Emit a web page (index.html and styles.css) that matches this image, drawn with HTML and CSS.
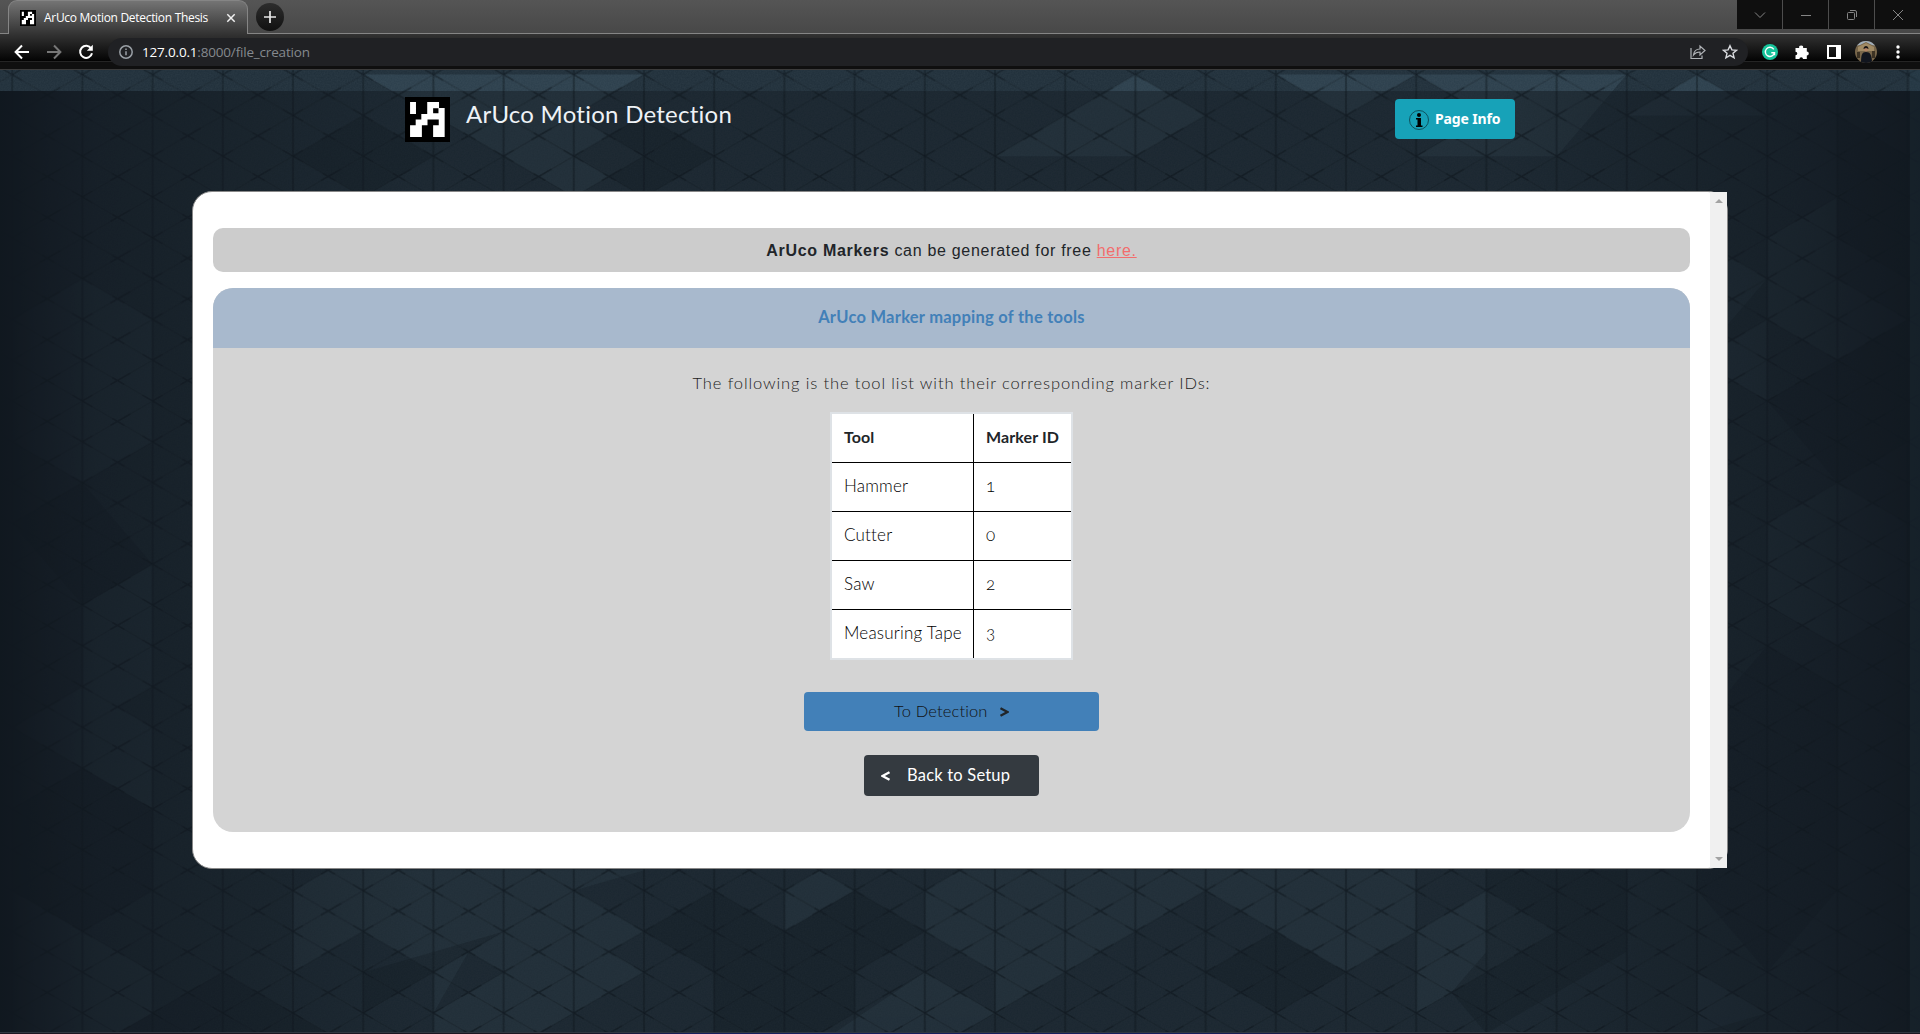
FILE: index.html
```html
<!DOCTYPE html>
<html lang="en">
<head>
<meta charset="utf-8">
<title>ArUco Motion Detection Thesis</title>
<link rel="stylesheet" href="styles.css">
</head>
<body>
<svg class="defs" width="0" height="0" aria-hidden="true">
  <symbol id="marker" viewBox="0 0 8 8">
    <path fill="#000" d="M0 0h8v8H0z"/>
    <path fill="#fff" d="M.9.9h1.05v2.1H.9zM3.950.9h2.1v1.050h1V7.100H5V5h1V4H4v1H3v2.100H.9V5h1V4h1V3h1.050zM5 2v.9h.950V2z" fill-rule="evenodd"/>
  </symbol>
</svg>
<div class="browser">
  <div class="tabstrip">
    <div class="tab">
      <svg class="favicon"><use href="#marker"/></svg>
      <span class="tab-title">ArUco Motion Detection Thesis</span>
      <svg class="tab-close" viewBox="0 0 10 10"><path d="M1.3 1.3l7.4 7.4M8.7 1.3L1.3 8.7" stroke="#f1f1f1" stroke-width="1.5"/></svg>
    </div>
    <div class="new-tab"><svg viewBox="0 0 12 12" width="12" height="12"><path d="M6 0v12M0 6h12" stroke="#e8e8e8" stroke-width="1.7"/></svg></div>
    <div class="window-buttons">
      <span><svg viewBox="0 0 12 12"><path d="M1 3.5l5 5 5-5"/></svg></span>
      <span><svg viewBox="0 0 12 12"><path d="M1 6.5h10"/></svg></span>
      <span><svg viewBox="0 0 12 12"><rect x="1.5" y="3.5" width="7" height="7" rx="1"/><path d="M4 1.5h5a1.5 1.5 0 0 1 1.5 1.5v5"/></svg></span>
      <span><svg viewBox="0 0 12 12"><path d="M1 1l10 10M11 1L1 11"/></svg></span>
    </div>
  </div>
  <div class="toolbar">
    <svg class="nav" viewBox="0 0 16 16"><path d="M15 8H2M8 1.5L1.6 8 8 14.5" stroke="#fff"/></svg>
    <svg class="nav" viewBox="0 0 16 16"><path d="M1 8h13M8 1.5L14.4 8 8 14.5" stroke="#777"/></svg>
    <svg class="nav" viewBox="0 0 16 16"><path d="M13.2 4.6A6 6 0 1 0 14 9.2" stroke="#fff"/><path d="M14.8.8v6H8.8z" fill="#fff" stroke="none"/></svg>
    <div class="omnibox">
      <svg class="site-info" viewBox="0 0 14 14"><circle cx="7" cy="7" r="6.2"/><path d="M7 6.3v4M7 3.4v1.6"/></svg>
      <span class="url"><b>127.0.0.1</b>:8000/file_creation</span>
      <svg class="share" viewBox="0 0 16 16"><path d="M1 4v10.5h11V11.5"/><path d="M3.5 11C4 7 6.500 5 10 5V2l5 4.500-5 4.500V8C7.200 8 5 9 3.500 11z"/></svg>
      <svg class="star" viewBox="0 0 16 16"><path d="M8 1.700l1.900 4.200 4.600.4-3.500 3 1.100 4.500L8 11.400l-4.100 2.400L5 9.300l-3.500-3 4.600-.4z"/></svg>
    </div>
    <svg class="grammar" viewBox="0 0 16 16"><circle cx="8" cy="8" r="8" fill="#15c39a"/><path d="M11.800 5.300A4.600 4.600 0 1 0 12.500 8.700H9.300M12.500 8.500v2.800" fill="none" stroke="#fff" stroke-width="1.400"/></svg>
    <svg class="puzzle" viewBox="0 0 16 16"><path fill="#fff" d="M1.500 4h3.700a2 2 0 1 1 3.900 0h3.700v3.600a2 2 0 1 1 0 4V15H9a1.800 1.800 0 0 0-3.600 0H1.500v-3.700a1.800 1.800 0 0 0 0-3.600z"/></svg>
    <svg class="panel-icon" viewBox="0 0 14 14"><path fill="#fff" fill-rule="evenodd" d="M0 0h14v14H0zM2 2v10h7V2z"/></svg>
    <svg class="avatar" viewBox="0 0 22 22"><defs><clipPath id="face"><circle cx="11" cy="11" r="11"/></clipPath></defs><g clip-path="url(#face)"><path fill="#78664a" d="M0 0h22v22H0z"/><path fill="#a0aebb" d="M0 0h22v5l-5-1-6-3-6 3-5 1z"/><path fill="#a18b65" d="M3 6l8-4 8 4v4H3z"/><path fill="#3d3324" d="M2 11h3v6H2zM17 10h3v7h-3z"/><path fill="#11151e" d="M6 22c0-8 1-11 5-11s6 3 6 11z"/><circle cx="11" cy="8.500" r="2" fill="#b48465"/><path fill="#171313" d="M8.500 8c0-4 5-4 5 0L11 7z"/></g></svg>
    <svg class="more" viewBox="0 0 4 14"><g fill="#fff"><circle cx="2" cy="2" r="1.700"/><circle cx="2" cy="7" r="1.700"/><circle cx="2" cy="12" r="1.700"/></g></svg>
  </div>
</div>

<div class="page">
  <svg class="backdrop" viewBox="0 70 1920 964" preserveAspectRatio="none" aria-hidden="true">
    <defs>
      <pattern id="grid" patternUnits="userSpaceOnUse" x="12.200" y="33.800" width="70.200" height="40.800">
        <path d="M0 0L70.200 40.800M0 40.800L70.200 0" stroke="#0e1820" stroke-width="1.100" opacity=".36"/>
        <path d="M0 0v40.800M70.200 0v40.800" stroke="#0e1820" stroke-width="2.200" opacity=".5"/>
        <path d="M0 0L10 5.800M60 34.900L70.200 40.800M0 40.800L10 35M30 17.400L42 24.400M28 24.400L48 12.900" stroke="#0a141b" stroke-width="1.600" opacity=".5"/>
      </pattern>
      <linearGradient id="sides"><stop offset="0" stop-color="#131b24"/><stop offset=".05" stop-color="#131b24" stop-opacity=".55"/><stop offset=".22" stop-color="#131b24" stop-opacity="0"/><stop offset=".78" stop-color="#131b24" stop-opacity="0"/><stop offset=".94" stop-color="#131b24" stop-opacity=".55"/><stop offset="1" stop-color="#131b24" stop-opacity=".9"/></linearGradient>
      <filter id="grain" x="0" y="0" width="100%" height="100%"><feTurbulence type="fractalNoise" baseFrequency=".7" numOctaves="2"/><feColorMatrix values="0 0 0 0 .6  0 0 0 0 .7  0 0 0 0 .75  0 0 0 .07 0"/></filter>
    </defs>
    <path fill="#263743" d="M0 70h1920v964H0z"/>
    <path fill="#1b2834" opacity=".6" d="M0 70h1920v21H0z"/>
    <g transform="translate(12.200 33.800) scale(70.200 40.800)">
      <g fill="#58788a" opacity=".22">
        <path d="M23 2l1-1 1 1zM25 5l1-1v2l1 1-1 1-1-1zM23 4l2 2-1 2-1-1zM24 8l1-1v2l-1-1z"/>
        <path d="M4 21l.5-.5H9l-1 .5-1 1-1 1-1-1-1 1zM0 21l2 2v1l-.5.500H0z"/>
        <path d="M6 23l2-2 1 1-.5.500.5.500-1.500 1.500H6zM6 24l1-1-.5-.5z"/>
        <path d="M11 21l.5-.5.5.5-1 1zM13 21l.5-.5H20V22l-1 1-1-1-1-1-1 1-1 1-1 1v-1l-1-1zM18.500 22.500l1-1 .5.500-1 1z"/>
        <path d="M14 21l1-.5 1 1-1 1-1 1zM11.700 24.500L13 23l1 1-.5.500z"/>
        <path d="M20 22l1-1 1 1-2 2zM24 23l1 1-1 .5z"/>
        <path d="M0 7l1-1 1 1v3l-1 1-1-1zM1 14l1-1v3l-1 1zM0 17l1-1 1 1v2l-1-1zM5 1l2 2 1-1 1-1zM18 1l1 1 1-1 2 2 1-2z"/>
        <path d="M7 3l1-1 1 1-1 1zM14 3l2-2 1 1-1 1zM20 3l1-1 1 1zM25 12l1-1 1 1v2l-1 1-1-1z"/>
      </g>
      <g fill="#101a23" opacity=".32">
        <path d="M26 8l1-1v3l-1 1-1-2zM26 2l1 1v3l-1-1zM1.500 24.500L3 23l1.500 1.500zM0 19l1-1 1 1v2l-1 1-1-1z"/>
        <path d="M12 21l1 1-1 1v1l-.5.500H10V23l-1-1 1-1 1 1zM17 23l1-1 1 1-1 1zM5 23l2-1-1 1-1 1zM21 20.500h2v2l-2 2-.5-1 .5-1z"/>
        <path d="M8 3l1-1 1 1-1 1zM4 3l1-1 1 1-1 1zM0 12l1-1 1 2-1 1zM24 17l1-2 1 1v5l-1 2-1-2z"/>
      </g>
    </g>
    <path fill="url(#grid)" d="M0 70h1920v964H0z"/>
    <path filter="url(#grain)" d="M0 70h1920v964H0z"/>
    <path fill="url(#sides)" d="M0 91h1920v943H0z"/>
    <path fill="#2b4452" opacity=".35" d="M1910 70h10v964h-10z"/>
  </svg>
  <div class="shade">
    <header class="site-header">
      <div class="brand"><svg class="logo"><use href="#marker"/></svg><span class="brand-name">ArUco Motion Detection</span></div>
      <a class="info-button"><svg viewBox="0 0 20 20"><circle cx="10" cy="10" r="9.500" fill="none" stroke="#0b3d48" stroke-width=".8"/><circle cx="10" cy="5" r="2" fill="#000"/><path d="M7 8h5v7.500h1.500V17H7v-1.500h1.500v-6H7z" fill="#000"/></svg><span>Page Info</span></a>
    </header>
    <main class="panel">
      <div class="panel-body">
        <p class="notice"><b>ArUco Markers</b> can be generated for free <a>here.</a></p>
        <section class="card">
          <h1 class="card-title">ArUco Marker mapping of the tools</h1>
          <div class="card-body">
            <p class="lead">The following is the tool list with their corresponding marker IDs:</p>
            <table class="tools">
              <tr><th>Tool</th><th>Marker ID</th></tr>
              <tr><td>Hammer</td><td>1</td></tr>
              <tr><td>Cutter</td><td>0</td></tr>
              <tr><td>Saw</td><td>2</td></tr>
              <tr><td>Measuring Tape</td><td>3</td></tr>
            </table>
            <a class="button primary"><span>To Detection</span><svg viewBox="0 0 9 10"><path d="M.5 1.200L7.500 5 .5 8.800" stroke="#212529"/></svg></a>
            <a class="button dark"><svg viewBox="0 0 9 10"><path d="M8.500 1.200L1.500 5l7 3.800" stroke="#fff"/></svg><span>Back to Setup</span></a>
          </div>
        </section>
      </div>
      <div class="scrollbar"><i class="up"></i><i class="down"></i></div>
    </main>
  </div>
  <div class="window-edge"></div>
</div>
</body>
</html>
```

FILE: styles.css
```css
* { box-sizing: border-box; }
body { margin: 0; width: 1920px; height: 1034px; overflow: hidden; background: #18222b; font-family: Lato, "Liberation Sans", sans-serif; color: #212529; }
.defs { display: block; }
svg { display: block; flex: none; }

.browser { height: 70px; font-family: "Open Sans", "Noto Sans", sans-serif; }
.tabstrip { display: flex; height: 34px; background: linear-gradient(#555, #484848); border-bottom: 1px solid #858585; }
.tab { display: flex; align-items: center; width: 240px; height: 34px; margin-left: 8px; padding: 0 11px 0 11px; border: 1px solid #858585; border-bottom: 0; border-radius: 9px 9px 0 0; background: linear-gradient(#747474, #333); }
.favicon { width: 16px; height: 16px; }
.tab-title { margin-left: 8px; width: 175px; font-size: 12px; letter-spacing: -.3px; color: #fff; white-space: nowrap; }
.tab-close { width: 10px; height: 10px; margin-left: 10px; }
.new-tab { display: flex; align-items: center; justify-content: center; width: 28px; height: 28px; margin: 3px 0 0 8px; border-radius: 50%; background: linear-gradient(#2d2d2d, #111); }
.window-buttons { display: flex; gap: 1px; margin-left: auto; width: 183px; height: 29px; background: #4d4d4d; }
.window-buttons span { display: flex; flex: 1; align-items: center; justify-content: center; background: #0f0f0f; }
.window-buttons svg { width: 12px; height: 12px; fill: none; stroke: #858585; }

.toolbar { display: flex; align-items: center; height: 36px; padding: 0 20px 0 14px; border-bottom: 1px solid #3b3b3b; background: linear-gradient(#333, #050505 26px, #000 27px, #242424 27px, #242424 28px, #0f0f0f 28px); }
.nav { width: 16px; height: 16px; margin: 0 16px 0 0; fill: none; stroke-width: 2; }
.omnibox { display: flex; align-items: center; width: 1640px; height: 28px; margin-left: -2px; padding: 0 10px 0 11px; border-radius: 14px; background: #202124; }
.site-info { width: 14px; height: 14px; fill: none; stroke: #9aa0a6; stroke-width: 1.5; }
.url { margin-left: 9px; font-size: 13.5px; letter-spacing: -.18px; color: #85898e; }
.url b { font-weight: 400; color: #fff; }
.share { width: 16px; height: 16px; margin-left: auto; fill: none; stroke: #b0b3b7; stroke-width: 1.2; }
.star { width: 16px; height: 16px; margin-left: 16px; fill: none; stroke: #dadce0; stroke-width: 1.4; }
.grammar { width: 16px; height: 16px; margin-left: 14px; }
.puzzle { width: 16px; height: 16px; margin-left: 16px; }
.panel-icon { width: 14px; height: 14px; margin-left: 17px; }
.avatar { width: 22px; height: 22px; margin-left: 14px; }
.more { width: 4px; height: 14px; margin-left: 19px; }

.page { position: relative; height: 964px; padding-top: 21px; overflow: hidden; }
.backdrop { position: absolute; inset: 0; width: 1920px; height: 964px; }
.shade { position: relative; height: 943px; padding: 6px 192px 0; background: rgba(15, 21, 27, .48); }
.site-header { display: flex; justify-content: space-between; height: 94px; padding: 0 213px; }
.brand { display: flex; }
.logo { width: 45px; height: 45px; }
.brand-name { margin: 2px 0 0 16px; font-size: 24px; line-height: 29px; letter-spacing: .25px; color: #eef2f6; white-space: nowrap; }
.info-button { display: flex; align-items: center; width: 120px; height: 40px; margin-top: 2px; padding-left: 14px; border-radius: 4px; background: #17a2b8; color: #fff; font: 700 14px "Noto Sans", sans-serif; letter-spacing: -.15px; }
.info-button svg { width: 20px; height: 20px; margin: 2px 6px 0 0; }
.info-button span { margin-top: -2px; }

.panel { display: flex; height: 678px; border: 1px solid #888; border-radius: 20px; background: #fff; }
.panel-body { flex: 1; padding: 36px 20px 0; }
.notice { margin: 0; height: 44px; border-radius: 10px; background: #ccc; text-align: center; font: 16px/45px "Liberation Sans", sans-serif; letter-spacing: .7px; }
.notice a { color: #f26d6d; text-decoration: underline; }
.card { margin-top: 16px; height: 544px; border-radius: 20px; overflow: hidden; background: #d4d4d4; }
.card-title { margin: 0; height: 60px; background: #a8b9cd; color: #4280b8; font-size: 16.5px; line-height: 58px; font-weight: 700; letter-spacing: .25px; text-align: center; }
.card-body { display: flex; flex-direction: column; align-items: center; padding-top: 23px; }
.lead { margin: 0 0 17px; color: #222; font-size: 16.5px; line-height: 24px; font-weight: 300; letter-spacing: .88px; white-space: nowrap; }
.tools { width: 243px; height: 248px; border: 2px solid #dee2e6; border-spacing: 0; background: #fff; font-size: 16px; table-layout: fixed; font-variant-numeric: oldstyle-nums; }
.tools th, .tools td { height: 49px; padding: 0 0 2px 12px; text-align: left; border-bottom: 1px solid #000; line-height: 24px; white-space: nowrap; }
.tools th { letter-spacing: .1px; }
.tools td { font-size: 17px; font-weight: 300; letter-spacing: .2px; color: #000; }
.tools tr:last-child td { height: 48px; border-bottom: 0; }
.tools th:first-child, .tools td:first-child { width: 142px; border-right: 1px solid #000; }
.button { display: flex; align-items: center; border-radius: 4px; font-size: 16px; white-space: nowrap; }
.button svg { width: 9px; height: 10px; fill: none; stroke-width: 2.4; }
.button span { margin-top: -1px; }
.primary { width: 295px; height: 39px; margin-top: 32px; padding-left: 90px; background: #4280b8; }
.primary span { width: 106px; font-size: 16.5px; font-weight: 300; letter-spacing: .15px; color: #111; }
.dark { width: 175px; height: 41px; margin-top: 24px; padding-left: 17px; gap: 17px; background: #343a40; color: #fff; font-size: 16.5px; letter-spacing: .2px; }
.scrollbar { display: flex; flex-direction: column; justify-content: space-between; align-items: center; width: 17px; padding: 7px 0; background: #f0f0f0; }
.scrollbar i { width: 0; height: 0; border: 4px solid transparent; }
.scrollbar .up { border-top: 0; border-bottom-color: #a3a3a3; }
.scrollbar .down { border-bottom: 0; border-top-color: #a3a3a3; }
.window-edge { position: absolute; left: 0; right: 0; bottom: 0; height: 2px; border-top: 1px solid #303640; background: linear-gradient(90deg, #1c1722 30%, #17205c 36%, #17205c 62%, #1c1722 76%); }
```
